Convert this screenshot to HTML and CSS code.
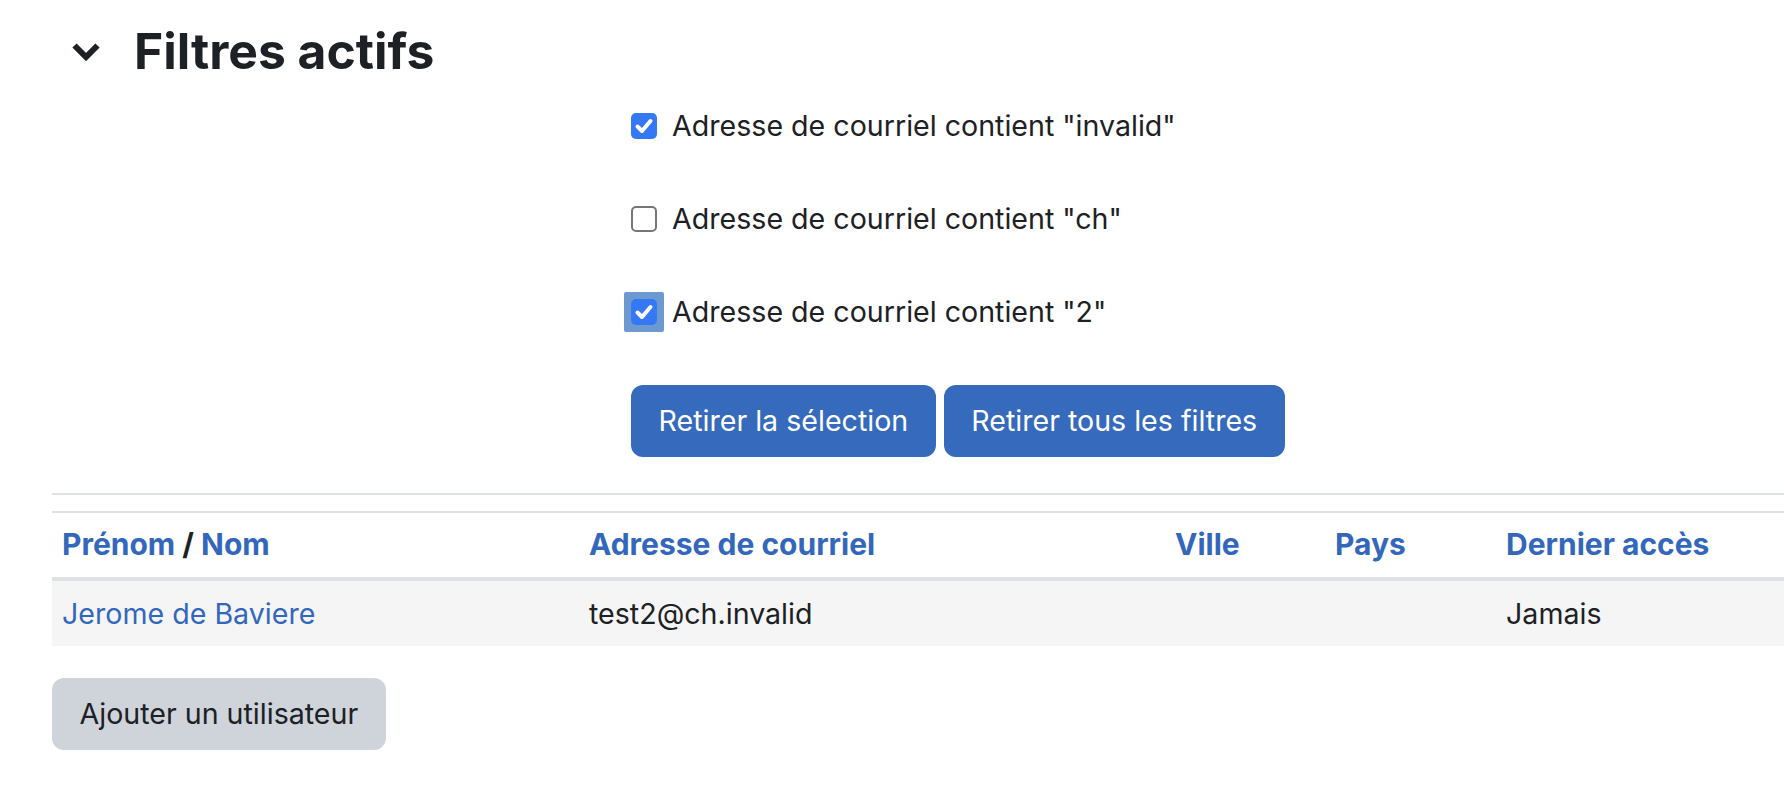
FILE: index.html
```html
<!DOCTYPE html>
<html lang="fr">
<head>
    <meta charset="UTF-8">
    <meta name="viewport" content="width=device-width, initial-scale=1.0">
    <title>Filtres actifs</title>
    <link rel="stylesheet" href="styles.css">
</head>
<body>
    <div class="page">
        <h3 class="section-head">
            <svg class="chevron" width="30" height="21" viewBox="0 0 30 21">
                <polyline points="3.5,4.5 15,16 26.5,4.5" fill="none" stroke="#1d2125" stroke-width="6" stroke-linejoin="miter"/>
            </svg>
            <span>Filtres actifs</span>
        </h3>

        <div class="filters">
            <label class="filter">
                <span class="check checked">
                    <svg width="26" height="26" viewBox="0 0 26 26"><polyline points="6.5,13.5 11,18 19.5,8" fill="none" stroke="#fff" stroke-width="4" stroke-linecap="round" stroke-linejoin="round"/></svg>
                </span>
                Adresse de courriel contient "invalid"
            </label>
            <label class="filter">
                <span class="check"></span>
                Adresse de courriel contient "ch"
            </label>
            <label class="filter">
                <span class="focus-ring">
                    <span class="check checked">
                        <svg width="26" height="26" viewBox="0 0 26 26"><polyline points="6.5,13.5 11,18 19.5,8" fill="none" stroke="#fff" stroke-width="4" stroke-linecap="round" stroke-linejoin="round"/></svg>
                    </span>
                </span>
                Adresse de courriel contient "2"
            </label>
            <div class="actions">
                <button class="btn btn-primary">Retirer la sélection</button>
                <button class="btn btn-primary">Retirer tous les filtres</button>
            </div>
        </div>

        <hr class="divider">

        <table class="users">
            <colgroup>
                <col style="width: 527px">
                <col style="width: 586px">
                <col style="width: 160px">
                <col style="width: 171px">
                <col>
            </colgroup>
            <thead>
                <tr>
                    <th><a href="#">Prénom</a> / <a href="#">Nom</a></th>
                    <th><a href="#">Adresse de courriel</a></th>
                    <th><a href="#">Ville</a></th>
                    <th><a href="#">Pays</a></th>
                    <th><a href="#">Dernier accès</a></th>
                </tr>
            </thead>
            <tbody>
                <tr>
                    <td><a href="#">Jerome de Baviere</a></td>
                    <td>test2@ch.invalid</td>
                    <td></td>
                    <td></td>
                    <td>Jamais</td>
                </tr>
            </tbody>
        </table>

        <button class="btn btn-secondary">Ajouter un utilisateur</button>
    </div>
</body>
</html>
```

FILE: styles.css
```css
body {
    margin: 0;
    font-family: Inter, "Noto Sans", sans-serif;
    font-size: 28.6px;
    line-height: 45px;
    color: #1d2125;
    background-color: #fff;
    overflow: hidden;
}
a {
    color: #3367bb;
    text-decoration: none;
}
.page {
    padding-left: 52px;
}
.section-head {
    display: flex;
    align-items: center;
    margin: 0;
    padding-top: 20px;
    font-size: 49.8px;
    line-height: 63px;
    font-weight: 700;
}
.chevron {
    margin-left: 19px;
    margin-right: 33px;
}
.filters {
    margin-left: 579px;
    padding-top: 20px;
}
.filter {
    display: flex;
    align-items: center;
    gap: 15px;
    height: 45px;
    margin-bottom: 48px;
}
.check {
    display: inline-flex;
    width: 26px;
    height: 26px;
    box-sizing: border-box;
    border: 2px solid #767676;
    border-radius: 5px;
    background-color: #fff;
}
.check.checked {
    border: none;
    background-color: #3478f6;
}
.focus-ring {
    display: inline-flex;
    margin: -7px;
    padding: 7px;
    border-radius: 2px;
    background-color: #6d99d1;
}
.actions {
    display: flex;
    gap: 8px;
    padding-top: 3px;
}
.btn {
    font-family: inherit;
    font-size: 28.6px;
    line-height: 46px;
    padding: 12px 26.5px;
    border: 1px solid transparent;
    border-radius: 12px;
}
.btn-primary {
    background-color: #356abd;
    color: #fff;
}
.btn-secondary {
    background-color: #ced4da;
    color: #1d2125;
    margin-top: 32px;
}
.divider {
    margin: 36px 0 16px;
    border: none;
    border-top: 2px solid #dee2e6;
}
.users {
    width: 1732px;
    table-layout: fixed;
    border-collapse: collapse;
}
.users th, .users td {
    text-align: left;
    padding: 10px;
    border-top: 2px solid #dee2e6;
}
.users th {
    font-size: 30px;
    padding-top: 9px;
    padding-bottom: 10px;
    border-bottom: 4px solid #dee2e6;
    font-weight: 700;
    white-space: nowrap;
}
.users td {
    border-top: none;
}
.users tbody tr {
    background-color: #f5f5f6;
}
```
